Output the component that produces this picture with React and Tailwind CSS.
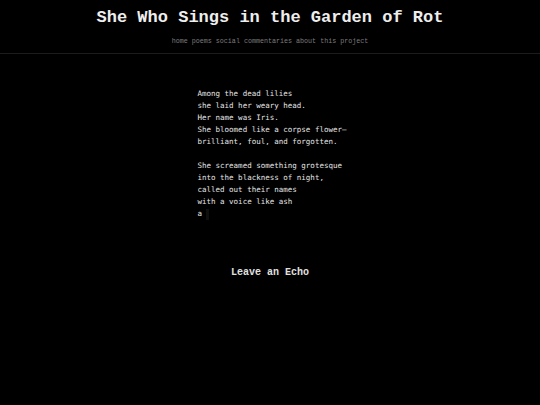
export default function App() {
  const mono = { fontFamily: '"Liberation Mono", "Courier New", monospace' };
  const dv = { fontFamily: '"DejaVu Sans Mono", monospace' };
  const stanza1 = [
    "Among the dead lilies",
    "she laid her weary head.",
    "Her name was Iris.",
    "She bloomed like a corpse flower\u2014",
    "brilliant, foul, and forgotten.",
  ];
  const stanza2 = [
    "She screamed something grotesque",
    "into the blackness of night,",
    "called out their names",
    "with a voice like ash",
  ];
  return (
    <div className="w-[540px] h-[405px] bg-black text-[#e5e5e5] overflow-hidden">
      <header className="h-[54px] border-b border-[#1c1c1c] flex flex-col items-center pt-[7px]">
        <h1 className="text-[17px] leading-[22px] font-bold text-[#eeeeee]" style={mono}>
          She Who Sings in the Garden of Rot
        </h1>
        <nav className="mt-[8px] text-[6.7px] leading-[9px] text-[#7c7c7c] flex gap-[4px]" style={mono}>
          <span>home</span>
          <span>poems</span>
          <span>social commentaries</span>
          <span>about this project</span>
        </nav>
      </header>
      <main className="flex flex-col items-center pt-[34px]">
        <div className="ml-[4px] text-[7.5px] leading-[12px] text-[#e6e6e6] whitespace-pre" style={dv}>
          {stanza1.map((l) => (
            <div key={l}>{l}</div>
          ))}
          <div className="h-[12px]" />
          {stanza2.map((l) => (
            <div key={l}>{l}</div>
          ))}
          <div className="flex items-center">
            <span>a</span>
            <span className="ml-[4px] inline-block w-[3px] h-[11px] bg-[#0f0f0f]" />
          </div>
        </div>
        <h2 className="mt-[46px] text-[10px] leading-[14px] font-bold text-[#e0e0e0]" style={mono}>
          Leave an Echo
        </h2>
      </main>
    </div>
  );
}
